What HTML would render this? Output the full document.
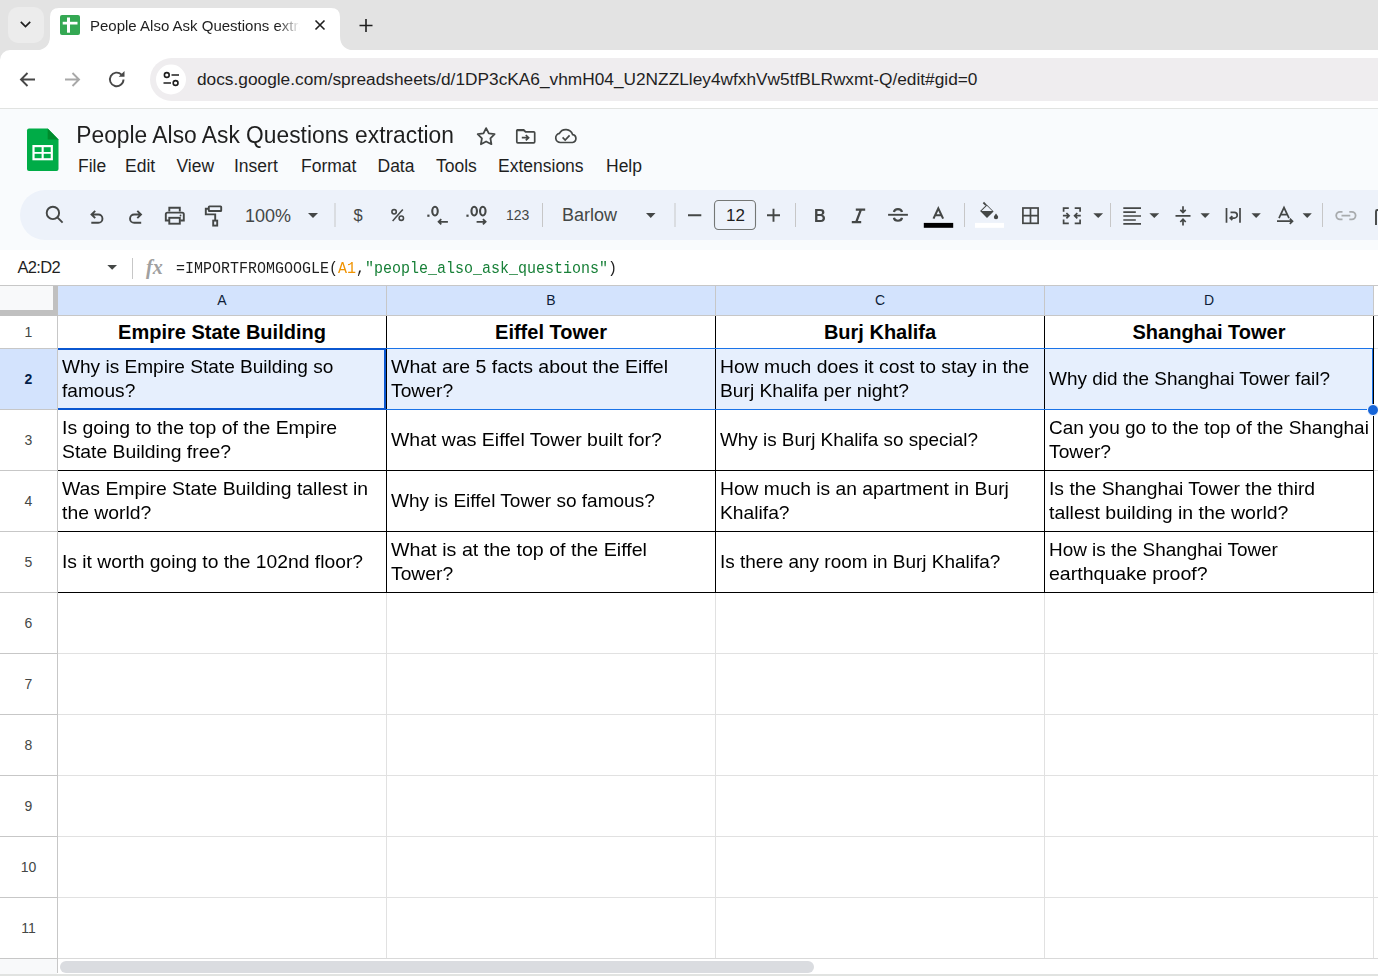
<!DOCTYPE html>
<html><head><meta charset="utf-8">
<style>
*{box-sizing:border-box;margin:0;padding:0}
html,body{width:1378px;height:976px;overflow:hidden;background:#fff;font-family:"Liberation Sans",sans-serif}
.a{position:absolute}
#tabs{left:0;top:0;width:1378px;height:62px;background:#e3e3e3}
#chrome{left:0;top:50px;width:1378px;height:59px;background:#fff;border-bottom:1px solid #e1e3e1}
#omni{left:150px;top:58px;width:1300px;height:43px;border-radius:22px;background:#efedef}
#shhead{left:0;top:109px;width:1378px;height:141px;background:#f9fbfd}
#tbar{left:20px;top:190px;width:1400px;height:50px;border-radius:25px;background:#edf2fa}
#fbar{left:0;top:250px;width:1378px;height:35px;background:#fff}
.sep{position:absolute;width:1px;background:#c7c7c7}
.menu{position:absolute;top:156px;font-size:17.5px;color:#1f1f1f;white-space:nowrap}
.grid{left:0;top:285px;width:1378px;height:691px;background:#fff}
.cell{position:absolute;display:flex;align-items:center;font-size:19px;line-height:24px;color:#000;white-space:nowrap;padding-left:4px}
.hdr{position:absolute;display:flex;align-items:center;justify-content:center;font-weight:bold;font-size:20px;color:#000;white-space:nowrap}
.rn{position:absolute;left:0;width:57px;display:flex;align-items:center;justify-content:center;font-size:14px;color:#444746;padding-bottom:1px}
.cn{position:absolute;top:285px;height:30px;display:flex;align-items:center;justify-content:center;font-size:14px;color:#0e1d38}
svg{position:absolute;overflow:visible}
</style></head><body>

<!-- ===== Browser tab strip ===== -->
<div id="tabs" class="a"></div>
<div class="a" style="left:8px;top:7px;width:36px;height:36px;border-radius:10px;background:#ececec"></div>
<svg style="left:0;top:0" width="1378" height="60">
  <!-- chevron -->
  <path d="M20.8 21.8 L25.5 26.5 L30.2 21.8" fill="none" stroke="#1f1f1f" stroke-width="1.7"/>
  <!-- active tab shape -->
  <path d="M34 50.5 C44 50.5 50 46 50 36 L50 17 Q50 8 59 8 L331 8 Q340 8 340 17 L340 36 C340 46 346 50.5 356 50.5 Z" fill="#fff"/>
  <!-- favicon -->
  <rect x="60" y="15" width="20" height="20" rx="2" fill="#34a853"/>
  <rect x="67" y="17.5" width="3" height="15.2" fill="#fff"/>
  <rect x="62.7" y="21.8" width="14.8" height="2.7" fill="#fff"/>
  <!-- close x -->
  <path d="M315.5 20.5 L324.5 29.5 M324.5 20.5 L315.5 29.5" stroke="#1f1f1f" stroke-width="1.6"/>
  <!-- new tab plus -->
  <path d="M366 19 L366 32 M359.5 25.5 L372.5 25.5" stroke="#1f1f1f" stroke-width="1.6"/>
</svg>
<div class="a" style="left:90px;top:16.5px;font-size:15px;color:#1f1f1f;white-space:nowrap;width:214px;overflow:hidden;-webkit-mask-image:linear-gradient(90deg,#000 188px,transparent 210px)">People Also Ask Questions extraction</div>

<!-- ===== Browser toolbar ===== -->
<div id="chrome" class="a" style="border-top-left-radius:10px"></div>
<div id="omni" class="a"></div>
<svg style="left:0;top:0" width="1378" height="110">
  <!-- back -->
  <path d="M35 79.5 L21 79.5 M27.5 73 L21 79.5 L27.5 86" fill="none" stroke="#474747" stroke-width="1.9"/>
  <!-- forward -->
  <path d="M65 79.5 L79 79.5 M72.5 73 L79 79.5 L72.5 86" fill="none" stroke="#a8a8a8" stroke-width="1.9"/>
  <!-- reload -->
  <path d="M123.5 79.5 A6.8 6.8 0 1 1 121.5 74.6" fill="none" stroke="#474747" stroke-width="1.9"/>
  <path d="M124.5 71 L124.5 76.8 L118.7 76.8 Z" fill="#474747"/>
  <!-- site info -->
  <circle cx="171" cy="79.5" r="15" fill="#fff"/>
  <circle cx="166.8" cy="75" r="2.4" fill="none" stroke="#1f1f1f" stroke-width="1.6"/>
  <path d="M171.5 75 L179 75 M163.5 83 L171 83" stroke="#1f1f1f" stroke-width="1.6"/>
  <circle cx="175.6" cy="83" r="2.4" fill="none" stroke="#1f1f1f" stroke-width="1.6"/>
</svg>
<div class="a" style="left:197px;top:68.5px;font-size:17.3px;color:#1f1f1f;white-space:nowrap">docs.google.com/spreadsheets/d/1DP3cKA6_vhmH04_U2NZZLley4wfxhVw5tfBLRwxmt-Q/edit#gid=0</div>

<!-- ===== Sheets header ===== -->
<div id="shhead" class="a"></div>
<div id="tbar" class="a"></div>
<svg style="left:0;top:0" width="1378" height="250">
  <!-- sheets logo -->
  <path d="M29 128.5 H47.7 L58.5 139.4 V169 Q58.5 171 56.5 171 H29 Q27 171 27 169 V130.5 Q27 128.5 29 128.5 Z" fill="#00ac47"/>
  <path d="M47.7 128.5 V139.4 H58.5 Z" fill="#008b2c"/>
  <rect x="32.4" y="145" width="20.5" height="15.3" fill="#fff"/>
  <rect x="34.6" y="147.2" width="7" height="4.8" fill="#00ac47"/>
  <rect x="43.7" y="147.2" width="7" height="4.8" fill="#00ac47"/>
  <rect x="34.6" y="153.8" width="7" height="4.4" fill="#00ac47"/>
  <rect x="43.7" y="153.8" width="7" height="4.4" fill="#00ac47"/>
  <!-- star -->
  <polygon points="486.1,128.1 488.8,133.4 494.6,134.2 490.4,138.4 491.4,144.2 486.1,141.5 480.9,144.2 481.9,138.4 477.7,134.2 483.5,133.4" fill="none" stroke="#444746" stroke-width="1.8" stroke-linejoin="round"/>
  <!-- folder move -->
  <path d="M517.5 129.8 H523.5 L525.5 131.8 H533.7 Q534.7 131.8 534.7 132.8 V141.8 Q534.7 142.8 533.7 142.8 H517.8 Q516.8 142.8 516.8 141.8 V130.5 Z" fill="none" stroke="#444746" stroke-width="1.7"/>
  <path d="M516.8 129 H523.8 L526 131.2 H516.8 Z" fill="#444746"/>
  <path d="M521.8 137.7 H528.5 M525.8 135 L528.6 137.7 L525.8 140.4" fill="none" stroke="#444746" stroke-width="1.7"/>
  <!-- cloud done -->
  <path d="M560.5 142.5 H572.5 A4 4 0 0 0 572.6 134.6 A7.2 7.2 0 0 0 559.4 133.4 A4.6 4.6 0 0 0 560.5 142.5 Z" fill="none" stroke="#444746" stroke-width="1.7"/>
  <path d="M562.6 137.4 L565.2 140 L569.6 135.4" fill="none" stroke="#444746" stroke-width="1.7"/>

  <g fill="none" stroke="#444746" stroke-width="1.9">
  <!-- search -->
  <circle cx="52.9" cy="212.9" r="6.2"/>
  <path d="M57.4 217.4 L62.6 222.6"/>
  <!-- undo -->
  <path d="M95.2 210.8 L91.5 214.5 L95.2 218.2 M91.5 214.5 H98.3 A4.15 4.15 0 0 1 98.3 222.8 H91.3"/>
  <!-- redo -->
  <path d="M137.3 210.8 L141 214.5 L137.3 218.2 M141 214.5 H134.2 A4.15 4.15 0 0 0 134.2 222.8 H141.2"/>
  <!-- print -->
  <path d="M169.3 211.5 V207.8 H179.8 V211.5"/>
  <path d="M169.3 220.5 H165.8 V214.2 Q165.8 212.6 167.4 212.6 H182.2 Q183.8 212.6 183.8 214.2 V220.5 H180.3"/>
  <rect x="169.3" y="217.8" width="10.5" height="5.9"/>
  <!-- paint format -->
  <rect x="208.8" y="206.4" width="12.4" height="4.6" rx="0.6"/>
  <path d="M208.8 208.7 H205.8 V214.4 H215.2 V220.6"/>
  <rect x="213.2" y="220.6" width="4" height="5"/>
  </g>
  <circle cx="180.5" cy="215.5" r="0.9" fill="#444746"/>
  <!-- zoom dropdown -->
  <path d="M308 213 H318 L313 218 Z" fill="#444746"/>
  <path d="M646 213 H655.5 L650.75 218 Z" fill="#444746"/>
  <path d="M1093.3 213.2 H1103.1 L1098.2 218.1 Z" fill="#444746"/>
  <path d="M1149.4 213.2 H1159.2 L1154.3 218.1 Z" fill="#444746"/>
  <path d="M1200.5 213.2 H1209.8 L1205.15 218.1 Z" fill="#444746"/>
  <path d="M1251.5 213.2 H1260.8 L1256.15 218.1 Z" fill="#444746"/>
  <path d="M1302.6 213.2 H1311.8 L1307.2 218.1 Z" fill="#444746"/>
  <!-- separators -->
  <g fill="#c7c7c7">
  <rect x="334.5" y="203" width="1" height="24"/>
  <rect x="542" y="203" width="1" height="24"/>
  <rect x="674.5" y="203" width="1" height="24"/>
  <rect x="795" y="203" width="1" height="24"/>
  <rect x="964" y="203" width="1" height="24"/>
  <rect x="1110" y="203" width="1" height="24"/>
  <rect x="1322" y="203" width="1" height="24"/>
  </g>
  <!-- minus / plus -->
  <path d="M688 215.3 H701.3 M767 215.3 H780 M773.5 208.8 V221.8" stroke="#444746" stroke-width="1.9"/>
  <rect x="714.5" y="200.5" width="41" height="29" rx="4" fill="none" stroke="#747775" stroke-width="1.1"/>
  <!-- strikethrough -->
  <g fill="none" stroke="#444746" stroke-width="1.9">
  <path d="M888.1 214.8 H907.9"/>
  <path d="M893.9 212 A4.1 3.5 0 0 1 902 212" stroke-width="2.2"/>
  <path d="M893.9 217.8 A4.1 3.5 0 0 0 902 217.8" stroke-width="2.2"/>
  </g>
  <!-- text color A -->
  <path d="M933.5 218.6 L938.3 208.4 L943.1 218.6 M935.3 215.2 H941.3" fill="none" stroke="#444746" stroke-width="2.1"/>
  <rect x="923.8" y="222.9" width="29.4" height="4.9" fill="#000"/>
  <!-- fill color bucket -->
  <path d="M983.4 202.5 L986 205.1" stroke="#444746" stroke-width="1.8"/>
  <path d="M986.7 204.5 L993.6 211.4 L987 218 L980.1 211.1 Z" fill="#444746"/>
  <path d="M981.5 211.1 L986.9 205.7 L992.2 211.1 Z" fill="#edf2fa"/>
  <path d="M996 213.4 Q998.2 216.2 998.2 217 A2.2 2.2 0 0 1 993.8 217 Q993.8 216.2 996 213.4 Z" fill="#444746"/>
  <rect x="975" y="222.9" width="29" height="4.9" fill="#fff"/>
  <!-- borders -->
  <g fill="none" stroke="#444746" stroke-width="1.7">
  <rect x="1022.9" y="208" width="15.2" height="15.3"/>
  <path d="M1030.5 208 V223.3 M1022.9 215.65 H1038.1"/>
  <!-- merge -->
  <path d="M1068.8 208.2 H1063.6 V211.8 M1063.6 219.6 V223.3 H1068.8"/>
  <path d="M1074.7 208.2 H1080.1 V211.8 M1080.1 219.6 V223.3 H1074.7"/>
  <path d="M1062.9 215.7 H1069 M1066.4 213 L1069.1 215.7 L1066.4 218.4"/>
  <path d="M1080.8 215.7 H1074.6 M1077.3 213 L1074.6 215.7 L1077.3 218.4"/>
  <!-- align left -->
  <path d="M1123.3 208.2 H1141 M1123.3 212.1 H1135.8 M1123.3 216 H1141 M1123.3 220 H1135.8 M1123.3 223.9 H1141"/>
  <!-- valign -->
  <path d="M1175.5 215.8 H1190.5 M1183 206.3 V212.3 M1180.3 209.9 L1183 212.6 L1185.7 209.9 M1183 225.6 V219.4 M1180.3 222 L1183 219.2 L1185.7 222"/>
  <!-- wrap -->
  <path d="M1226.5 208 V222.7 M1240 208 V222.7"/>
  <path d="M1230.5 212.3 H1234.3 A2.9 2.9 0 0 1 1234.3 218.1 H1230.2 M1232.3 216 L1230.2 218.1 L1232.3 220.2"/>
  <!-- text rotate -->
  <path d="M1279 218.1 L1284 207.6 L1289 218.1 M1280.8 214.6 H1287.2"/>
  <path d="M1277 221.2 H1292.5 M1289.8 218.6 L1292.5 221.2 L1289.8 223.8"/>
  </g>
  <!-- link -->
  <g fill="none" stroke="#a8abad" stroke-width="1.8">
  <path d="M1342.5 211.8 H1340 A3.8 3.8 0 0 0 1340 219.4 H1342.5 M1349.3 211.8 H1351.8 A3.8 3.8 0 0 1 1351.8 219.4 H1349.3 M1341.5 215.6 H1350.3"/>
  </g>
  <path d="M1376 225 V211.5 Q1376 210 1377.5 210 H1380" fill="none" stroke="#444746" stroke-width="1.9"/>
  <!-- decimal icons -->
  <g fill="none" stroke="#444746" stroke-width="1.8">
  <ellipse cx="435" cy="211.1" rx="2.75" ry="4.4" stroke-width="2.1"/>
  <path d="M447.9 221.8 H438.6 M441.3 219.2 L438.6 221.8 L441.3 224.4"/>
  <ellipse cx="474.2" cy="211.1" rx="2.75" ry="4.4" stroke-width="2.1"/>
  <ellipse cx="482.8" cy="211.1" rx="2.75" ry="4.4" stroke-width="2.1"/>
  <path d="M476.6 221.8 H485.6 M482.9 219.2 L485.6 221.8 L482.9 224.4"/>
  <!-- percent -->
  <circle cx="394.1" cy="211.8" r="2.2" stroke-width="1.6"/>
  <circle cx="401.3" cy="218.2" r="2.2" stroke-width="1.6"/>
  <path d="M402.8 209.4 L392.6 220.9" stroke-width="1.5"/>
  <!-- italic -->
  <path d="M855.8 209.7 H865.2 M851.8 222.2 H861.2 M860.9 209.7 L856.2 222.2" stroke-width="2.3"/>
  </g>
  <rect x="427.3" y="214.6" width="2.2" height="2.2" fill="#444746"/>
  <rect x="466.4" y="214.6" width="2.2" height="2.2" fill="#444746"/>
  <!-- name box dropdown -->
  <path d="M106.8 265.5 H117.3 L112.05 270.5 Z" fill="#444746"/>
</svg>
<div class="a" style="left:76.3px;top:121.3px;transform:scaleY(1.07);transform-origin:0 0;font-size:22.8px;color:#1f1f1f;white-space:nowrap">People Also Ask Questions extraction</div>
<div class="menu" style="left:78px">File</div>
<div class="menu" style="left:125px">Edit</div>
<div class="menu" style="left:176.5px">View</div>
<div class="menu" style="left:234px">Insert</div>
<div class="menu" style="left:301px">Format</div>
<div class="menu" style="left:377.5px">Data</div>
<div class="menu" style="left:436px">Tools</div>
<div class="menu" style="left:498px">Extensions</div>
<div class="menu" style="left:606px">Help</div>
<div class="a" style="left:245px;top:206px;font-size:18px;color:#444746;white-space:nowrap">100%</div>
<div class="a" style="left:353.5px;top:206px;font-size:16.5px;color:#444746;white-space:nowrap">$</div>
<div class="a" style="left:506px;top:207px;font-size:14px;color:#444746;white-space:nowrap">123</div>
<div class="a" style="left:562px;top:205px;font-size:18px;color:#444746;white-space:nowrap">Barlow</div>
<div class="a" style="left:726px;top:205.5px;font-size:17px;color:#1f1f1f;white-space:nowrap">12</div>
<div class="a" style="left:813.5px;top:205px;font-size:18.5px;font-weight:bold;color:#444746;transform:scaleX(0.88);transform-origin:0 0">B</div>

<!-- ===== Formula bar ===== -->
<div id="fbar" class="a"></div>
<div class="a" style="left:17.5px;top:257.5px;font-size:16.5px;letter-spacing:-0.7px;color:#1f1f1f;white-space:nowrap">A2:D2</div>
<div class="a" style="left:132px;top:258px;width:1px;height:21px;background:#c7c7c7"></div>
<div class="a" style="left:146px;top:256px;font-family:'Liberation Serif',serif;font-style:italic;font-weight:bold;font-size:20px;color:#a0a0a0;white-space:nowrap;letter-spacing:0px">fx</div>
<svg style="left:0;top:0" width="200" height="290"><path d="M107.3 265 H117 L112.15 269.7 Z" fill="#444746"/></svg>
<div class="a" style="left:176px;top:260px;transform:scaleY(1.1);transform-origin:0 0;font-family:'Liberation Mono',monospace;font-size:15px;color:#1f1f1f;white-space:nowrap">=IMPORTFROMGOOGLE(<span style="color:#f09300">A1</span>,<span style="color:#188038">"people_also_ask_questions"</span>)</div>

<!-- ===== Grid ===== -->
<!-- GRID START -->
<div class="a" style="left:0px;top:285px;width:1378px;height:1px;background:#c7c7c7;"></div>
<div class="a" style="left:0px;top:286px;width:57px;height:29px;background:#f8f9fa;"></div>
<div class="a" style="left:53px;top:286px;width:5px;height:29px;background:#c0c0c0;"></div>
<div class="a" style="left:0px;top:310px;width:58px;height:6px;background:#c0c0c0;"></div>
<div class="a" style="left:58px;top:286px;width:1315px;height:29px;background:#d3e3fd;"></div>
<div class="a" style="left:1374px;top:286px;width:4px;height:29px;background:#ffffff;"></div>
<div class="a" style="left:386px;top:286px;width:1px;height:29px;background:#c7c7c7;"></div>
<div class="a" style="left:715px;top:286px;width:1px;height:29px;background:#c7c7c7;"></div>
<div class="a" style="left:1044px;top:286px;width:1px;height:29px;background:#c7c7c7;"></div>
<div class="a" style="left:1373px;top:286px;width:1px;height:29px;background:#c7c7c7;"></div>
<div class="a" style="left:58px;top:315px;width:1320px;height:1px;background:#c7c7c7;"></div>
<div class="a" style="left:57px;top:316px;width:1px;height:643px;background:#c7c7c7;"></div>
<div class="a" style="left:0px;top:349px;width:57px;height:60px;background:#d3e3fd;"></div>
<div class="a" style="left:0px;top:348px;width:57px;height:1px;background:#c7c7c7;"></div>
<div class="a" style="left:0px;top:409px;width:57px;height:1px;background:#c7c7c7;"></div>
<div class="a" style="left:0px;top:470px;width:57px;height:1px;background:#c7c7c7;"></div>
<div class="a" style="left:0px;top:531px;width:57px;height:1px;background:#c7c7c7;"></div>
<div class="a" style="left:0px;top:592px;width:57px;height:1px;background:#c7c7c7;"></div>
<div class="a" style="left:0px;top:653px;width:57px;height:1px;background:#c7c7c7;"></div>
<div class="a" style="left:0px;top:714px;width:57px;height:1px;background:#c7c7c7;"></div>
<div class="a" style="left:0px;top:775px;width:57px;height:1px;background:#c7c7c7;"></div>
<div class="a" style="left:0px;top:836px;width:57px;height:1px;background:#c7c7c7;"></div>
<div class="a" style="left:0px;top:897px;width:57px;height:1px;background:#c7c7c7;"></div>
<div class="a" style="left:0px;top:958px;width:57px;height:1px;background:#c7c7c7;"></div>
<div class="a" style="left:58px;top:653px;width:1320px;height:1px;background:#e1e1e1;"></div>
<div class="a" style="left:58px;top:714px;width:1320px;height:1px;background:#e1e1e1;"></div>
<div class="a" style="left:58px;top:775px;width:1320px;height:1px;background:#e1e1e1;"></div>
<div class="a" style="left:58px;top:836px;width:1320px;height:1px;background:#e1e1e1;"></div>
<div class="a" style="left:58px;top:897px;width:1320px;height:1px;background:#e1e1e1;"></div>
<div class="a" style="left:58px;top:958px;width:1320px;height:1px;background:#d9d9d9;"></div>
<div class="a" style="left:0px;top:958px;width:58px;height:1px;background:#c7c7c7;"></div>
<div class="a" style="left:386px;top:593px;width:1px;height:365px;background:#e1e1e1;"></div>
<div class="a" style="left:715px;top:593px;width:1px;height:365px;background:#e1e1e1;"></div>
<div class="a" style="left:1044px;top:593px;width:1px;height:365px;background:#e1e1e1;"></div>
<div class="a" style="left:1373px;top:593px;width:1px;height:365px;background:#e1e1e1;"></div>
<div class="a" style="left:1374px;top:348px;width:4px;height:1px;background:#e1e1e1;"></div>
<div class="a" style="left:1374px;top:409px;width:4px;height:1px;background:#e1e1e1;"></div>
<div class="a" style="left:1374px;top:470px;width:4px;height:1px;background:#e1e1e1;"></div>
<div class="a" style="left:1374px;top:531px;width:4px;height:1px;background:#e1e1e1;"></div>
<div class="a" style="left:1374px;top:592px;width:4px;height:1px;background:#e1e1e1;"></div>
<div class="a" style="left:58px;top:349px;width:1314px;height:60px;background:rgba(14,101,235,0.1);"></div>
<div class="a" style="left:386px;top:316px;width:1px;height:277px;background:#000;"></div>
<div class="a" style="left:715px;top:316px;width:1px;height:277px;background:#000;"></div>
<div class="a" style="left:1044px;top:316px;width:1px;height:277px;background:#000;"></div>
<div class="a" style="left:1373px;top:316px;width:1px;height:277px;background:#000;"></div>
<div class="a" style="left:58px;top:348px;width:1315px;height:1px;background:#000;"></div>
<div class="a" style="left:58px;top:409px;width:1315px;height:1px;background:#000;"></div>
<div class="a" style="left:58px;top:470px;width:1315px;height:1px;background:#000;"></div>
<div class="a" style="left:58px;top:531px;width:1315px;height:1px;background:#000;"></div>
<div class="a" style="left:58px;top:592px;width:1315px;height:1px;background:#000;"></div>
<div class="a" style="left:58px;top:348px;width:1315px;height:1px;background:#1a73e8;"></div>
<div class="a" style="left:58px;top:409px;width:1315px;height:1px;background:#1a73e8;"></div>
<div class="a" style="left:1372px;top:348px;width:1px;height:62px;background:#1a73e8;"></div>
<div class="a" style="left:58px;top:348px;width:328px;height:2px;background:#0b57d0;"></div>
<div class="a" style="left:58px;top:408px;width:328px;height:2px;background:#0b57d0;"></div>
<div class="a" style="left:384px;top:348px;width:2px;height:62px;background:#0b57d0;"></div>
<div class="a" style="left:1367px;top:404px;width:12px;height:12px;border-radius:50%;background:#1765d8;border:1px solid #fff"></div>
<div class="a" style="left:0px;top:959px;width:1378px;height:17px;background:#ffffff;"></div>
<div class="a" style="left:0px;top:959px;width:57px;height:15px;background:#f8f9fa;"></div>
<div class="a" style="left:57px;top:959px;width:1px;height:14px;background:#c7c7c7;"></div>
<div class="a" style="left:0px;top:974px;width:1378px;height:2px;background:#e1e3e1;"></div>
<div class="a" style="left:60px;top:961px;width:754px;height:12px;border-radius:6px;background:#dadce0"></div>
<div class="rn" style="top:316px;height:32px;">1</div>
<div class="rn" style="top:349px;height:60px;font-weight:bold;color:#041e49;">2</div>
<div class="rn" style="top:410px;height:60px;">3</div>
<div class="rn" style="top:471px;height:60px;">4</div>
<div class="rn" style="top:532px;height:60px;">5</div>
<div class="rn" style="top:593px;height:60px;">6</div>
<div class="rn" style="top:654px;height:60px;">7</div>
<div class="rn" style="top:715px;height:60px;">8</div>
<div class="rn" style="top:776px;height:60px;">9</div>
<div class="rn" style="top:837px;height:60px;">10</div>
<div class="rn" style="top:898px;height:60px;">11</div>
<div class="cn" style="left:58px;width:328px">A</div>
<div class="cn" style="left:387px;width:328px">B</div>
<div class="cn" style="left:716px;width:328px">C</div>
<div class="cn" style="left:1045px;width:328px">D</div>
<div class="hdr" style="left:58px;top:316px;width:328px;height:32px">Empire State Building</div>
<div class="hdr" style="left:387px;top:316px;width:328px;height:32px">Eiffel Tower</div>
<div class="hdr" style="left:716px;top:316px;width:328px;height:32px">Burj Khalifa</div>
<div class="hdr" style="left:1045px;top:316px;width:328px;height:32px">Shanghai Tower</div>
<div class="cell" style="left:58px;top:349px;width:328px;height:60px"><div><div id="L0" style="transform:scaleX(1.0037);transform-origin:0 0">Why is Empire State Building so</div><div id="L1" style="transform:scaleX(1.0056);transform-origin:0 0">famous?</div></div></div>
<div class="cell" style="left:387px;top:349px;width:328px;height:60px"><div><div id="L2" style="transform:scaleX(1.0260);transform-origin:0 0">What are 5 facts about the Eiffel</div><div id="L3" style="transform:scaleX(1.0148);transform-origin:0 0">Tower?</div></div></div>
<div class="cell" style="left:716px;top:349px;width:328px;height:60px"><div><div id="L4" style="transform:scaleX(1.0172);transform-origin:0 0">How much does it cost to stay in the</div><div id="L5" style="transform:scaleX(1.0113);transform-origin:0 0">Burj Khalifa per night?</div></div></div>
<div class="cell" style="left:1045px;top:349px;width:328px;height:60px"><div><div id="L6" style="transform:scaleX(0.9975);transform-origin:0 0">Why did the Shanghai Tower fail?</div></div></div>
<div class="cell" style="left:58px;top:410px;width:328px;height:60px"><div><div id="L7" style="transform:scaleX(1.0216);transform-origin:0 0">Is going to the top of the Empire</div><div id="L8" style="transform:scaleX(1.0188);transform-origin:0 0">State Building free?</div></div></div>
<div class="cell" style="left:387px;top:410px;width:328px;height:60px"><div><div id="L9" style="transform:scaleX(1.0242);transform-origin:0 0">What was Eiffel Tower built for?</div></div></div>
<div class="cell" style="left:716px;top:410px;width:328px;height:60px"><div><div id="L10" style="transform:scaleX(0.9927);transform-origin:0 0">Why is Burj Khalifa so special?</div></div></div>
<div class="cell" style="left:1045px;top:410px;width:328px;height:60px"><div><div id="L11" style="transform:scaleX(0.9994);transform-origin:0 0">Can you go to the top of the Shanghai</div><div id="L12" style="transform:scaleX(1.0133);transform-origin:0 0">Tower?</div></div></div>
<div class="cell" style="left:58px;top:471px;width:328px;height:60px"><div><div id="L13" style="transform:scaleX(1.0191);transform-origin:0 0">Was Empire State Building tallest in</div><div id="L14" style="transform:scaleX(1.0195);transform-origin:0 0">the world?</div></div></div>
<div class="cell" style="left:387px;top:471px;width:328px;height:60px"><div><div id="L15" style="transform:scaleX(1.0019);transform-origin:0 0">Why is Eiffel Tower so famous?</div></div></div>
<div class="cell" style="left:716px;top:471px;width:328px;height:60px"><div><div id="L16" style="transform:scaleX(1.0130);transform-origin:0 0">How much is an apartment in Burj</div><div id="L17" style="transform:scaleX(1.0133);transform-origin:0 0">Khalifa?</div></div></div>
<div class="cell" style="left:1045px;top:471px;width:328px;height:60px"><div><div id="L18" style="transform:scaleX(1.0173);transform-origin:0 0">Is the Shanghai Tower the third</div><div id="L19" style="transform:scaleX(1.0258);transform-origin:0 0">tallest building in the world?</div></div></div>
<div class="cell" style="left:58px;top:532px;width:328px;height:60px"><div><div id="L20" style="transform:scaleX(1.0142);transform-origin:0 0">Is it worth going to the 102nd floor?</div></div></div>
<div class="cell" style="left:387px;top:532px;width:328px;height:60px"><div><div id="L21" style="transform:scaleX(1.0328);transform-origin:0 0">What is at the top of the Eiffel</div><div id="L22" style="transform:scaleX(1.0148);transform-origin:0 0">Tower?</div></div></div>
<div class="cell" style="left:716px;top:532px;width:328px;height:60px"><div><div id="L23" style="transform:scaleX(0.9979);transform-origin:0 0">Is there any room in Burj Khalifa?</div></div></div>
<div class="cell" style="left:1045px;top:532px;width:328px;height:60px"><div><div id="L24" style="transform:scaleX(0.9957);transform-origin:0 0">How is the Shanghai Tower</div><div id="L25" style="transform:scaleX(1.0286);transform-origin:0 0">earthquake proof?</div></div></div>
<!-- GRID END -->

</body></html>
